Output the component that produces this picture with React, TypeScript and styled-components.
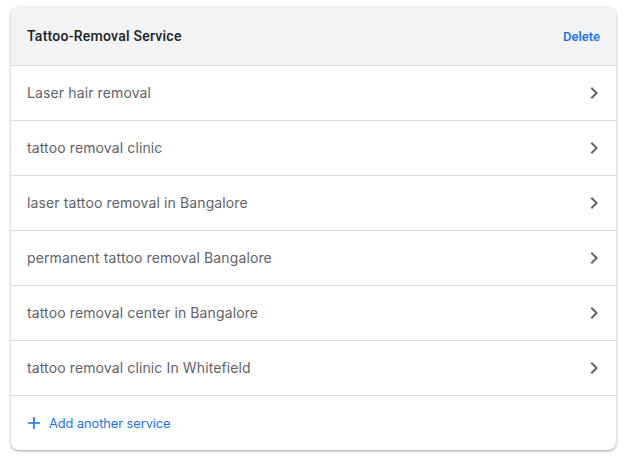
import React from "react";
import styled, { createGlobalStyle } from "styled-components";

const GlobalStyle = createGlobalStyle`
    body {
        margin: 0;
        background: #ffffff;
        font-family: Roboto, "Liberation Sans", Arial, sans-serif;
    }
`;

const Page = styled.div`
    padding: 7px 8px 8px 11px;
`;

const Card = styled.div`
    width: 605px;
    border-radius: 8px;
    background: #ffffff;
    box-shadow: 0 1px 2px 0 rgba(60, 64, 67, 0.3), 0 1px 3px 1px rgba(60, 64, 67, 0.15);
    overflow: hidden;
`;

const Header = styled.div`
    display: flex;
    align-items: center;
    justify-content: space-between;
    height: 58px;
    padding: 0 16px;
    background: #f1f3f4;
    border-bottom: 1px solid #dadce0;
`;

const Title = styled.div`
    font-size: 14px;
    font-weight: 500;
    letter-spacing: 0.25px;
    color: #202124;
`;

const TextButton = styled.button`
    border: none;
    background: none;
    padding: 0;
    font-family: Roboto, sans-serif;
    font-size: 13px;
    font-weight: 500;
    color: #1a73e8;
    cursor: pointer;
`;

const Row = styled.div`
    display: flex;
    align-items: center;
    justify-content: space-between;
    height: 54px;
    padding: 0 16px;
    border-bottom: 1px solid #dadce0;
    cursor: pointer;
`;

const RowLabel = styled.span`
    font-family: Inter, Roboto, sans-serif;
    font-size: 14px;
    letter-spacing: 0.12px;
    color: #5f6368;
    margin-top: -1px;
`;

const Footer = styled.div`
    display: flex;
    align-items: center;
    height: 54px;
    padding: 0 16px;
`;

const AddButton = styled(TextButton)`
    display: flex;
    align-items: center;
    gap: 8px;
    font-family: Inter, Roboto, sans-serif;
    font-weight: 400;
    font-size: 12.8px;
    letter-spacing: -0.05px;
`;

const Chevron = () => (
    <svg width="24" height="24" viewBox="0 0 24 24" style={{ marginRight: -6 }}>
        <path d="M10 6L8.59 7.41 13.17 12l-4.58 4.59L10 18l6-6z" fill="#5f6368" />
    </svg>
);

const Plus = () => (
    <svg width="14" height="14" viewBox="0 0 14 14">
        <path d="M7 1v12M1 7h12" stroke="#1a73e8" strokeWidth="1.6" />
    </svg>
);

const services = [
    "Laser hair removal",
    "tattoo removal clinic",
    "laser tattoo removal in Bangalore",
    "permanent tattoo removal Bangalore",
    "tattoo removal center in Bangalore",
    "tattoo removal clinic In Whitefield",
];

export default function App() {
    return (
        <Page>
            <GlobalStyle />
            <Card>
                <Header>
                    <Title>Tattoo-Removal Service</Title>
                    <TextButton>Delete</TextButton>
                </Header>
                {services.map((s) => (
                    <Row key={s}>
                        <RowLabel>{s}</RowLabel>
                        <Chevron />
                    </Row>
                ))}
                <Footer>
                    <AddButton>
                        <Plus />
                        Add another service
                    </AddButton>
                </Footer>
            </Card>
        </Page>
    );
}
